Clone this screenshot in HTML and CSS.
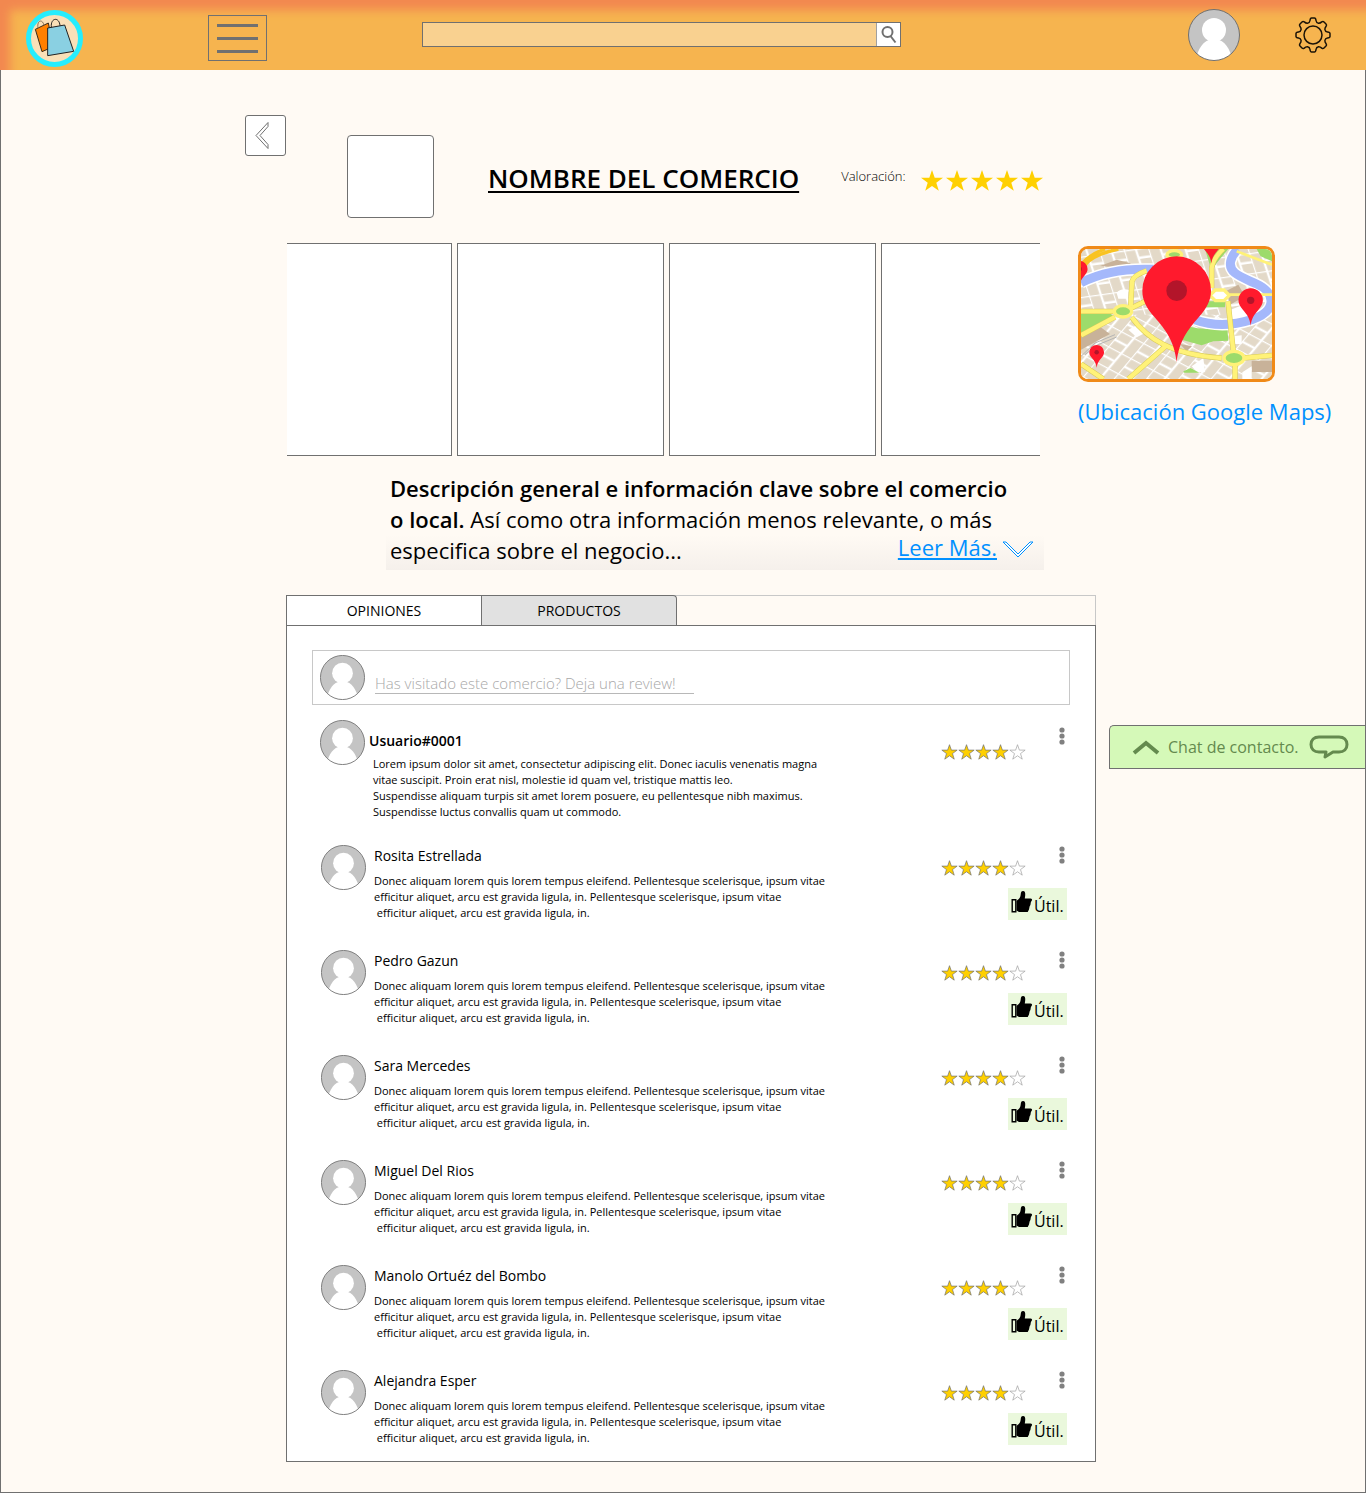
FILE: index.html
```html
<!DOCTYPE html>
<html lang="es">
<head>
<meta charset="utf-8">
<meta name="viewport" content="width=device-width, initial-scale=1">
<title>Nombre del comercio</title>
<link rel="stylesheet" href="styles.css">
</head>
<body>
<svg class="sprite" aria-hidden="true">
  <symbol id="avatar" viewBox="0 0 52 52">
    <clipPath id="avatar-clip"><circle cx="26" cy="26" r="25.5"/></clipPath>
    <circle cx="26" cy="26" r="25.5" fill="#c4c4c4"/>
    <g clip-path="url(#avatar-clip)" fill="#fff">
      <circle cx="26" cy="21" r="12"/>
      <path d="M7 54C9 41 15 31 24 30.500H28C37 31 43 41 45 54z"/>
    </g>
    <circle cx="26" cy="26" r="25.500" fill="none" stroke="#707070"/>
  </symbol>
  <symbol id="star" viewBox="0 0 24 23">
    <path d="M12 1l2.700 7.800h8.300l-6.700 5 2.500 8-6.800-4.900-6.800 4.900 2.500-8L1 8.800h8.300z"/>
  </symbol>
  <symbol id="dots" viewBox="0 0 6 18">
    <circle cx="3" cy="3" r="2.600"/><circle cx="3" cy="9" r="2.600"/><circle cx="3" cy="15" r="2.600"/>
  </symbol>
  <symbol id="thumb" viewBox="0 0 22 24">
    <path d="M1.700 9.700h3.600v12H1.700z" fill="none" stroke="#000" stroke-width="1.400"/>
    <path d="M7 10c2-1 3-3 3.200-5.500C10.300 2 11 1 12.500 1 14.500 1 15 3 14.700 5.500L14.300 8.500H20c1.500 0 2 1.200 1.200 2.300l-.8 1.200-.5 3-.8 1.500-.6 3-1.300 2.500H8.500L6 20.500V11z"/>
  </symbol>
</svg>

<header class="topbar">
  <div class="topbar-left">
    <a class="brand" href="#" aria-label="Inicio">
      <svg width="57" height="57" viewBox="78 30 171 171">
        <circle cx="163.500" cy="115.500" r="78" fill="#fae0b8" stroke="#26edfd" stroke-width="15"/>
        <path d="M106 88L145 69L160 140L126 155z" fill="#ff8000" stroke="#3a2a18" stroke-width="3"/>
        <path d="M114 84c-4-24 14-28 18-8" fill="none" stroke="#8a7358" stroke-width="3"/>
        <path d="M143 84L194 75L221 154L143 167z" fill="#8ad0e2" stroke="#222" stroke-width="3"/>
        <path d="M154 82c-3-30 24-32 26-5" fill="none" stroke="#222" stroke-width="3"/>
      </svg>
    </a>
    <button class="menu" type="button" aria-label="Menú"><span></span><span></span><span></span></button>
  </div>
  <form class="search" role="search">
    <input type="search" aria-label="Buscar">
    <button type="button" aria-label="Buscar">
      <svg width="17" height="19" viewBox="0 0 17 19"><circle cx="7.500" cy="7" r="5"/><path d="M10.500 11l5 6.500"/></svg>
    </button>
  </form>
  <nav class="account">
    <a href="#" aria-label="Perfil"><svg width="52" height="52"><use href="#avatar"/></svg></a>
    <a href="#" aria-label="Ajustes">
      <svg class="gear" width="36" height="36" viewBox="0 0 36 36">
        <path d="M15 3.500Q15.300 1 16.500 1h3Q20.700 1 21 3.500Q21.300 5.800 23.500 6.200Q25.300 6.300 26.700 4.900Q28 4 29 5L31 7Q32 8 31.100 9.300Q29.700 11 29.900 12.600Q30.300 14.700 32.500 15Q35 15.300 35 16.500v3Q35 20.700 32.500 21Q30.300 21.300 29.900 23.400Q29.700 25 31.100 26.700Q32 28 31 29L29 31Q28 32 26.700 31.100Q25.300 29.700 23.500 29.800Q21.300 30.200 21 32.500Q20.700 35 19.500 35h-3Q15.300 35 15 32.500Q14.700 30.200 12.500 29.800Q10.700 29.700 9.300 31.100Q8 32 7 31L5 29Q4 28 4.900 26.700Q6.300 25 6.100 23.400Q5.700 21.300 3.500 21Q1 20.700 1 19.500v-3Q1 15.300 3.500 15Q5.700 14.700 6.100 12.600Q6.300 11 4.900 9.300Q4 8 5 7L7 5Q8 4 9.300 4.900Q10.700 6.300 12.500 6.200Q14.700 5.800 15 3.500z"/>
        <circle cx="18" cy="18" r="9"/>
      </svg>
    </a>
  </nav>
</header>

<main class="page">
  <section class="shop-head">
    <button class="back" type="button" aria-label="Volver">
      <svg width="15" height="29" viewBox="0 0 15 29"><path d="M13 1.500L1 14.500L13 27.500V23.500L5 14.500L13 5.500z"/></svg>
    </button>
    <div class="shop-logo"></div>
    <h1>NOMBRE DEL COMERCIO</h1>
    <div class="rating">
      <span class="rating-label">Valoración:</span>
      <span class="stars-big" role="img" aria-label="5 de 5">
        <svg><use href="#star"/></svg><svg><use href="#star"/></svg><svg><use href="#star"/></svg><svg><use href="#star"/></svg><svg><use href="#star"/></svg>
      </span>
    </div>
  </section>

  <div class="overview">
    <div class="overview-main">
      <ul class="gallery"><li></li><li></li><li></li><li></li></ul>
      <div class="about">
        <p><strong>Descripción general e información clave sobre el comercio<br>o local.</strong> Así como otra información menos relevante, o más</p>
        <div class="about-more">
          <p>especifica sobre el negocio...</p>
          <a href="#">Leer Más.</a>
          <svg width="32" height="17" viewBox="0 0 32 17"><path d="M1 1L16 16L31 1H28L16 13L4 1z"/></svg>
        </div>
      </div>
    </div>
    <aside class="location">
      <svg class="map" viewBox="33 33 573 390" preserveAspectRatio="xMidYMid slice" role="img" aria-label="Mapa">
        <defs>
          <pattern id="streets" width="76" height="58" patternUnits="userSpaceOnUse" patternTransform="rotate(28) skewX(-12)">
            <path d="M0 0H76M0 32H44M0 0V58M44 0V58" stroke="#fff" stroke-width="7" fill="none"/>
          </pattern>
          <pattern id="streets-top" width="72" height="60" patternUnits="userSpaceOnUse" patternTransform="rotate(-8) skewX(10)">
            <path d="M0 0H72M36 28H72M0 0V60M36 0V60" stroke="#fff" stroke-width="7" fill="none"/>
          </pattern>
          <g id="pin">
            <path d="M0 214C-8 150-32 120-66 80C-90 52-103 30-103 0A103 103 0 0 1 103 0C103 30 90 52 66 80C32 120 8 150 0 214z" fill="#ff1a2d"/>
            <circle r="31" fill="#b3152a"/>
          </g>
        </defs>
        <path d="M33 33H606V423H33z" fill="#e3d9c8"/>
        <path d="M33 33H606V230H33z" fill="url(#streets-top)"/>
        <path d="M33 230H606V423H33z" fill="url(#streets)"/>
        <path d="M90 84L140 65L182 76L176 90z M33 282L92 268L120 288L33 335z M470 158L505 140L525 175L480 200z M545 368H606V402H545z M330 318L366 325L350 340z" fill="#c8b299"/>
        <path d="M140 165Q150 150 175 155V182H145z M482 215L520 200L575 230L540 250L485 240z M175 275L200 262L225 285L200 298z M365 385L400 360L405 402L380 402z M517 403L545 385V423H517z M490 295L515 292V318H492z" fill="#fff"/>
        <path d="M33 228L120 225L135 240L33 290z M345 262Q400 280 472 270L475 308L430 310L395 322L335 305z M405 33H475L440 75L425 100z M405 190H465V208H405z M340 400L362 390L388 404H342z M560 33H606V70L572 55z" fill="#9ddb6b"/>
        <path d="M33 134C90 105 160 90 250 94M375 245C430 265 490 262 545 245C630 215 610 160 560 138C510 115 475 105 482 70Q487 48 505 33" fill="none" stroke="#fff" stroke-width="36"/>
        <path d="M33 134C90 105 160 90 250 94M375 245C430 265 490 262 545 245C630 215 610 160 560 138C510 115 475 105 482 70Q487 48 505 33" fill="none" stroke="#a4b8fb" stroke-width="27"/>
        <path d="M33 355L75 315L135 290M45 350L80 322L140 297" fill="none" stroke="#b5b5b5" stroke-width="3"/>
        <g fill="none" stroke="#d8ca58" stroke-width="16">
          <path d="M33 220H130M33 292L135 237M180 212L225 190M182 205L186 130Q190 112 230 98M185 238C230 300 300 350 455 360M520 360L606 352M490 340L474 190M495 380V423M290 322L175 423M33 378L100 423M425 150V90Q430 60 460 33"/>
        </g>
        <g fill="none" stroke="#fff278" stroke-width="13">
          <path d="M33 220H130M33 292L135 237M180 212L225 190M182 205L186 130Q190 112 230 98M185 238C230 300 300 350 455 360M520 360L606 352M490 340L474 190M495 380V423M290 322L175 423M33 378L100 423M425 150V90Q430 60 460 33"/>
          <path d="M480 170H606M500 40L606 80" stroke-width="8"/>
        </g>
        <path d="M33 110L48 78Q70 50 145 33M33 80Q60 48 105 33" fill="none" stroke="#f9c321" stroke-width="10"/>
        <g stroke="#fff278" stroke-width="10">
          <ellipse cx="159" cy="220" rx="26" ry="17" fill="#9ddb6b"/>
          <ellipse cx="492" cy="360" rx="30" ry="20" fill="#9ddb6b"/>
          <ellipse cx="313" cy="50" rx="22" ry="12" fill="#9ddb6b"/>
          <path d="M420 172L436 156H462L478 172L462 188H436z" fill="#fff"/>
        </g>
        <use href="#pin" transform="translate(424 12) scale(.3)"/>
        <use href="#pin" transform="translate(28 93) scale(.24)"/>
        <use href="#pin" transform="translate(542 187) scale(.355)"/>
        <use href="#pin" transform="translate(80 343) scale(.215)"/>
        <use href="#pin" transform="translate(320 158)"/>
      </svg>
      <a href="#">(Ubicación Google Maps)</a>
    </aside>
  </div>

  <div class="community">
    <section class="board">
      <div class="tabs" role="tablist">
        <button class="tab tab-active" type="button" role="tab" aria-selected="true">OPINIONES</button>
        <button class="tab" type="button" role="tab" aria-selected="false">PRODUCTOS</button>
      </div>
      <div class="panel">
        <form class="write">
          <svg class="face"><use href="#avatar"/></svg>
          <input type="text" aria-label="Deja una review" placeholder="Has visitado este comercio? Deja una review!">
        </form>

        <article class="review review-own">
          <svg class="face"><use href="#avatar"/></svg>
          <div class="review-body">
            <h2>Usuario#0001</h2>
            <p>Lorem ipsum dolor sit amet, consectetur adipiscing elit. Donec iaculis venenatis magna<br>vitae suscipit. Proin erat nisl, molestie id quam vel, tristique mattis leo.<br>Suspendisse aliquam turpis sit amet lorem posuere, eu pellentesque nibh maximus.<br>Suspendisse luctus convallis quam ut commodo.</p>
          </div>
          <div class="review-side">
            <span class="stars" role="img" aria-label="4 de 5"><svg><use href="#star"/></svg><svg><use href="#star"/></svg><svg><use href="#star"/></svg><svg><use href="#star"/></svg><svg class="off"><use href="#star"/></svg></span>
            <button class="more" type="button" aria-label="Opciones"><svg><use href="#dots"/></svg></button>
          </div>
        </article>

        <article class="review">
          <svg class="face"><use href="#avatar"/></svg>
          <div class="review-body">
            <h2>Rosita Estrellada</h2>
            <p>Donec aliquam lorem quis lorem tempus eleifend. Pellentesque scelerisque, ipsum vitae<br>efficitur aliquet, arcu est gravida ligula, in. Pellentesque scelerisque, ipsum vitae<br>&nbsp;efficitur aliquet, arcu est gravida ligula, in.</p>
          </div>
          <div class="review-side">
            <span class="stars" role="img" aria-label="4 de 5"><svg><use href="#star"/></svg><svg><use href="#star"/></svg><svg><use href="#star"/></svg><svg><use href="#star"/></svg><svg class="off"><use href="#star"/></svg></span>
            <button class="more" type="button" aria-label="Opciones"><svg><use href="#dots"/></svg></button>
            <button class="useful" type="button"><svg><use href="#thumb"/></svg><span>Útil.</span></button>
          </div>
        </article>

        <article class="review">
          <svg class="face"><use href="#avatar"/></svg>
          <div class="review-body">
            <h2>Pedro Gazun</h2>
            <p>Donec aliquam lorem quis lorem tempus eleifend. Pellentesque scelerisque, ipsum vitae<br>efficitur aliquet, arcu est gravida ligula, in. Pellentesque scelerisque, ipsum vitae<br>&nbsp;efficitur aliquet, arcu est gravida ligula, in.</p>
          </div>
          <div class="review-side">
            <span class="stars" role="img" aria-label="4 de 5"><svg><use href="#star"/></svg><svg><use href="#star"/></svg><svg><use href="#star"/></svg><svg><use href="#star"/></svg><svg class="off"><use href="#star"/></svg></span>
            <button class="more" type="button" aria-label="Opciones"><svg><use href="#dots"/></svg></button>
            <button class="useful" type="button"><svg><use href="#thumb"/></svg><span>Útil.</span></button>
          </div>
        </article>

        <article class="review">
          <svg class="face"><use href="#avatar"/></svg>
          <div class="review-body">
            <h2>Sara Mercedes</h2>
            <p>Donec aliquam lorem quis lorem tempus eleifend. Pellentesque scelerisque, ipsum vitae<br>efficitur aliquet, arcu est gravida ligula, in. Pellentesque scelerisque, ipsum vitae<br>&nbsp;efficitur aliquet, arcu est gravida ligula, in.</p>
          </div>
          <div class="review-side">
            <span class="stars" role="img" aria-label="4 de 5"><svg><use href="#star"/></svg><svg><use href="#star"/></svg><svg><use href="#star"/></svg><svg><use href="#star"/></svg><svg class="off"><use href="#star"/></svg></span>
            <button class="more" type="button" aria-label="Opciones"><svg><use href="#dots"/></svg></button>
            <button class="useful" type="button"><svg><use href="#thumb"/></svg><span>Útil.</span></button>
          </div>
        </article>

        <article class="review">
          <svg class="face"><use href="#avatar"/></svg>
          <div class="review-body">
            <h2>Miguel Del Rios</h2>
            <p>Donec aliquam lorem quis lorem tempus eleifend. Pellentesque scelerisque, ipsum vitae<br>efficitur aliquet, arcu est gravida ligula, in. Pellentesque scelerisque, ipsum vitae<br>&nbsp;efficitur aliquet, arcu est gravida ligula, in.</p>
          </div>
          <div class="review-side">
            <span class="stars" role="img" aria-label="4 de 5"><svg><use href="#star"/></svg><svg><use href="#star"/></svg><svg><use href="#star"/></svg><svg><use href="#star"/></svg><svg class="off"><use href="#star"/></svg></span>
            <button class="more" type="button" aria-label="Opciones"><svg><use href="#dots"/></svg></button>
            <button class="useful" type="button"><svg><use href="#thumb"/></svg><span>Útil.</span></button>
          </div>
        </article>

        <article class="review">
          <svg class="face"><use href="#avatar"/></svg>
          <div class="review-body">
            <h2>Manolo Ortuéz del Bombo</h2>
            <p>Donec aliquam lorem quis lorem tempus eleifend. Pellentesque scelerisque, ipsum vitae<br>efficitur aliquet, arcu est gravida ligula, in. Pellentesque scelerisque, ipsum vitae<br>&nbsp;efficitur aliquet, arcu est gravida ligula, in.</p>
          </div>
          <div class="review-side">
            <span class="stars" role="img" aria-label="4 de 5"><svg><use href="#star"/></svg><svg><use href="#star"/></svg><svg><use href="#star"/></svg><svg><use href="#star"/></svg><svg class="off"><use href="#star"/></svg></span>
            <button class="more" type="button" aria-label="Opciones"><svg><use href="#dots"/></svg></button>
            <button class="useful" type="button"><svg><use href="#thumb"/></svg><span>Útil.</span></button>
          </div>
        </article>

        <article class="review">
          <svg class="face"><use href="#avatar"/></svg>
          <div class="review-body">
            <h2>Alejandra Esper</h2>
            <p>Donec aliquam lorem quis lorem tempus eleifend. Pellentesque scelerisque, ipsum vitae<br>efficitur aliquet, arcu est gravida ligula, in. Pellentesque scelerisque, ipsum vitae<br>&nbsp;efficitur aliquet, arcu est gravida ligula, in.</p>
          </div>
          <div class="review-side">
            <span class="stars" role="img" aria-label="4 de 5"><svg><use href="#star"/></svg><svg><use href="#star"/></svg><svg><use href="#star"/></svg><svg><use href="#star"/></svg><svg class="off"><use href="#star"/></svg></span>
            <button class="more" type="button" aria-label="Opciones"><svg><use href="#dots"/></svg></button>
            <button class="useful" type="button"><svg><use href="#thumb"/></svg><span>Útil.</span></button>
          </div>
        </article>
      </div>
    </section>

    <button class="chat" type="button">
      <svg width="28" height="15" viewBox="0 0 28 15"><path d="M2 13L14 3L26 13" fill="none" stroke="#648a4e" stroke-width="4"/></svg>
      <span>Chat de contacto.</span>
      <svg width="40" height="24" viewBox="0 0 40 24"><path d="M10 2H30C35 2 38 5 38 9.500S35 17 30 17H24L16 22L17 17H10C5 17 2 14 2 9.500S5 2 10 2z" fill="none" stroke="#648a4e" stroke-width="3" stroke-linejoin="round"/></svg>
    </button>
  </div>
</main>
</body>
</html>
```
FILE: styles.css
```css
* {
  box-sizing: border-box;
}

body {
  margin: 0;
  background: #fffaf4;
  color: #000;
  font-family: "Open Sans", "Noto Sans", sans-serif;
}

h1, h2, p, ul {
  margin: 0;
  padding: 0;
}

button, input {
  margin: 0;
  padding: 0;
  border: 0;
  background: none;
  color: inherit;
  font: inherit;
}

button {
  cursor: pointer;
}

svg {
  display: block;
}

.sprite {
  position: absolute;
  width: 0;
  height: 0;
}

/* Top bar */

.topbar {
  display: flex;
  align-items: center;
  height: 70px;
  padding: 0 35px 0 26px;
  background: #f6b44f;
  box-shadow: inset 10px 10px 10px #f28850;
}

.topbar-left {
  display: flex;
  align-items: center;
  gap: 125px;
  padding-top: 6px;
}

.menu {
  display: flex;
  flex-direction: column;
  justify-content: center;
  gap: 10px;
  width: 59px;
  height: 46px;
  padding: 0 8px;
  border: 1px solid #707070;
}

.menu span {
  height: 3px;
  background: #707070;
}

.search {
  display: flex;
  flex: 0 1 479px;
  height: 25px;
  margin: 0 0 2px 155px;
  border: 1px solid #707070;
  background: #f9d190;
}

.search input {
  flex: 1;
  min-width: 0;
  padding: 0 8px;
  font-size: 14px;
}

.search button {
  display: grid;
  place-items: center;
  width: 24px;
  border-left: 1px solid #a0a0a0;
  background: #fff;
}

.search svg {
  fill: none;
  stroke: #707070;
  stroke-width: 2;
}

.account {
  display: flex;
  align-items: center;
  gap: 55px;
  margin-left: auto;
}

.gear {
  fill: none;
  stroke: #1c1408;
  stroke-width: 1.5;
}

/* Page */

.page {
  padding: 45px 0 30px 244px;
  border: 1px solid #707070;
  border-top: 0;
}

.shop-head {
  display: flex;
  align-items: flex-start;
  height: 128px;
}

.back {
  display: grid;
  place-items: center;
  width: 41px;
  height: 41px;
  padding-right: 6px;
  border: 1px solid #707070;
  border-radius: 3px;
  background: #fff;
}

.back svg {
  fill: #fff;
  stroke: #707070;
}

.shop-logo {
  width: 87px;
  height: 83px;
  margin: 20px 54px 0 61px;
  border: 1px solid #707070;
  border-radius: 4px;
  background: #fff;
}

.shop-head h1 {
  margin-top: 45px;
  font-size: 26px;
  line-height: 36px;
  font-weight: 600;
  text-decoration: underline;
  text-decoration-thickness: 2px;
  text-underline-offset: 3px;
}

.rating {
  display: flex;
  gap: 14px;
  margin: 51px 0 0 42px;
}

.rating-label {
  font-size: 13px;
  line-height: 20px;
  font-weight: 300;
}

.stars-big {
  display: flex;
  gap: 1px;
  padding-top: 3px;
}

.stars-big svg {
  width: 24px;
  height: 23px;
  fill: #ffd000;
}

/* Gallery, description and map */

.overview {
  display: grid;
  grid-template-columns: minmax(0, 1fr) 256px;
  gap: 38px;
  padding: 0 31px 0 42px;
}

.gallery {
  display: flex;
  gap: 5px;
  overflow: hidden;
  list-style: none;
}

.gallery li {
  flex: none;
  width: 207px;
  height: 213px;
  border: 1px solid #707070;
  background: #fff;
}

.gallery li:first-child {
  margin-left: -42px;
}

.about {
  width: 658px;
  margin: 17px 0 25px 99px;
  font-size: 22px;
  line-height: 31px;
  white-space: nowrap;
}

.about strong {
  font-weight: 600;
}

.about p {
  padding-left: 4px;
}

.about-more {
  display: flex;
  align-items: flex-start;
  height: 35px;
  background: linear-gradient(#fffaf4, #f5f0eb);
}

.about-more a {
  margin-left: auto;
  color: #0090ff;
  line-height: 24px;
}

.about-more svg {
  margin: 6px 10px 0 5px;
  fill: #fff;
  stroke: #0090ff;
}

.location {
  padding-top: 3px;
}

.map {
  width: 197px;
  height: 136px;
  border: 3px solid #f08a18;
  border-radius: 10px;
}

.location a {
  display: block;
  margin-top: 14px;
  color: #0090ff;
  font-size: 22px;
  line-height: 31px;
  text-decoration: none;
  white-space: nowrap;
}

/* Reviews */

.community {
  display: grid;
  grid-template-columns: minmax(0, 1fr) 256px;
  gap: 13px;
  align-items: start;
  padding-left: 41px;
}

.tabs {
  display: flex;
  height: 30px;
  border: 1px solid #c8c8c8;
  border-width: 1px 1px 0 0;
}

.tab {
  width: 196px;
  margin: -1px 0 0 -1px;
  border: 1px solid #707070;
  border-bottom: 0;
  border-radius: 0 4px 0 0;
  background: #e1e1e1;
  font-size: 14px;
}

.tab-active {
  margin-left: 0;
  border-radius: 0;
  background: #fff;
}

.panel {
  padding: 24px 25px 16px;
  border: 1px solid #707070;
  background: #fff;
}

.face {
  width: 45px;
  height: 45px;
}

.write {
  display: flex;
  gap: 10px;
  height: 55px;
  margin-bottom: 15px;
  padding: 4px 7px;
  border: 1px solid #c8c8c8;
}

.write input {
  width: 319px;
  height: 22px;
  margin-top: 17px;
  border-bottom: 1px solid #b8b8b8;
  font-size: 15px;
  font-weight: 300;
}

.write input::placeholder {
  color: #a8a8a8;
  opacity: 1;
}

.review {
  display: grid;
  grid-template-columns: 45px minmax(0, 1fr) 126px;
  column-gap: 8px;
  height: 105px;
  padding: 0 3px 0 9px;
}

.review:last-child {
  height: 75px;
}

.review-own {
  height: 125px;
  padding-left: 8px;
}

.review h2 {
  padding-top: 1px;
  font-size: 14px;
  line-height: 20px;
  font-weight: 400;
}

.review p {
  margin-top: 7px;
  font-size: 11px;
  line-height: 16px;
  white-space: nowrap;
}

.review-own h2 {
  margin: 10px 0 0 -4px;
  font-weight: 600;
}

.review-own p {
  margin-top: 5px;
}

.review-side {
  display: grid;
  grid-template-columns: 1fr auto;
  grid-template-rows: 43px 32px;
}

.review-own .review-side {
  padding-top: 6px;
}

.stars {
  display: flex;
  padding-top: 15px;
}

.review-own .stars {
  padding-top: 18px;
}

.stars svg {
  width: 17px;
  height: 16px;
  fill: #ffd000;
  stroke: #707070;
}

.stars .off {
  fill: #fff;
  stroke: #a0a0a0;
}

.more {
  width: 6px;
  height: 18px;
  margin: 1px 2px 0 0;
}

.more svg {
  width: 6px;
  height: 18px;
  fill: #808080;
}

.useful {
  display: flex;
  grid-column: 1 / -1;
  justify-self: end;
  gap: 1px;
  width: 59px;
  height: 32px;
  padding: 2px 0 0 2px;
  background: #eaf8dc;
  font-size: 16px;
  line-height: 32px;
}

.useful svg {
  flex: none;
  width: 23px;
  height: 24px;
}

.chat {
  display: flex;
  align-items: center;
  gap: 8px;
  height: 44px;
  margin-top: 130px;
  padding: 0 16px 0 22px;
  border: 1px solid #707070;
  border-right: 0;
  border-radius: 5px 0 0 0;
  background: #d5f9b8;
  color: #648a4e;
  font-size: 16px;
  white-space: nowrap;
}

.chat span {
  margin-right: auto;
}
```
